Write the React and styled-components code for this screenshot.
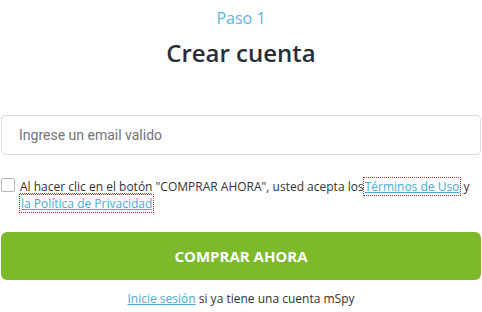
import React from "react";
import styled, { createGlobalStyle } from "styled-components";

const GlobalStyle = createGlobalStyle`
  body {
    margin: 0;
    background: #ffffff;
    font-family: "Open Sans", "Liberation Sans", sans-serif;
  }
`;

const App = () => {
  return (
    <>
      <GlobalStyle />
      <StyledForm>
        <StyledStep>Paso 1</StyledStep>
        <StyledTitle>Crear cuenta</StyledTitle>
        <StyledInput type="email" placeholder="Ingrese un email valido" />
        <StyledAgree>
          <StyledCheckbox type="checkbox" />
          <StyledAgreeText>
            <StyledSpell>Al hacer clic en el botón</StyledSpell> "COMPRAR AHORA", usted
            acepta los<StyledLink href="#">Términos de Uso</StyledLink> y{" "}
            <StyledLink href="#">la Política de Privacidad</StyledLink>
          </StyledAgreeText>
        </StyledAgree>
        <StyledButton type="button">COMPRAR AHORA</StyledButton>
        <StyledFooter>
          <StyledPlainLink href="#">Inicie sesión</StyledPlainLink> si ya tiene una
          cuenta mSpy
        </StyledFooter>
      </StyledForm>
    </>
  );
};

const StyledForm = styled.div`
  display: flex;
  flex-direction: column;
  padding: 7px 1px 0;
`;

const StyledStep = styled.div`
  text-align: center;
  color: #5cb6e6;
  font-size: 16px;
  line-height: 22px;
`;

const StyledTitle = styled.h1`
  margin: 8px 0 0;
  text-align: center;
  color: #2a2e37;
  font-size: 24px;
  font-weight: 600;
  line-height: 32px;
`;

const StyledInput = styled.input`
  box-sizing: border-box;
  margin-top: 46px;
  width: 100%;
  height: 40px;
  padding: 0 17px;
  border: 1px solid #dcdcdc;
  border-radius: 4px;
  font-family: Roboto, "Liberation Sans", sans-serif;
  font-size: 14px;
  outline: none;

  &::placeholder {
    color: #757575;
  }
`;

const StyledAgree = styled.label`
  display: flex;
  align-items: flex-start;
  gap: 5px;
  margin-top: 23px;
`;

const StyledCheckbox = styled.input`
  appearance: none;
  flex-shrink: 0;
  margin: 0;
  width: 14px;
  height: 14px;
  border: 1px solid #b5b5b5;
  border-radius: 2px;
  background: #fff;
`;

const StyledAgreeText = styled.p`
  margin: 0;
  color: #333333;
  font-size: 12px;
  line-height: 17px;
`;

const StyledSpell = styled.span`
  text-decoration: underline dotted #c0392b;
  text-underline-offset: 2px;
`;

const StyledLink = styled.a`
  color: #48a9dc;
  text-decoration: underline;
  white-space: nowrap;
  outline: 1px dotted #a33030;
  outline-offset: 0;
  padding: 0 1px;
`;

const StyledButton = styled.button`
  margin-top: 20px;
  height: 48px;
  width: 100%;
  border: none;
  border-radius: 6px;
  background: #7dba2a;
  color: #ffffff;
  font-family: "Open Sans", "Liberation Sans", sans-serif;
  font-size: 15px;
  font-weight: 700;
`;

const StyledFooter = styled.p`
  margin: 11px 0 0;
  text-align: center;
  color: #333333;
  font-size: 12px;
  line-height: 16px;
`;

const StyledPlainLink = styled.a`
  color: #48a9dc;
  text-decoration: underline;
`;

export default App;
